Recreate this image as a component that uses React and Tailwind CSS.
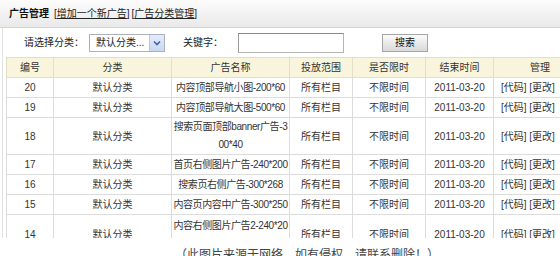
import React from "react";

const rows = [
  { id: "20", name: ["内容顶部导航小图-200*60"] },
  { id: "19", name: ["内容顶部导航大图-500*60"] },
  { id: "18", name: ["搜索页面顶部banner广告-3", "00*40"] },
  { id: "17", name: ["首页右侧图片广告-240*200"] },
  { id: "16", name: ["搜索页右侧广告-300*268"] },
  { id: "15", name: ["内容页内容中广告-300*250"] },
  { id: "14", name: ["内容右侧图片广告2-240*20", "0"] },
];

const td = "border border-[#dcdcdc] text-center px-0 py-0 whitespace-nowrap overflow-hidden";

export default function App() {
  return (
    <div
      className="w-[560px] h-[256px] overflow-hidden bg-white text-[#333] text-[10px]"
      style={{ fontFamily: '"Liberation Sans", "Noto Sans CJK SC", sans-serif' }}
    >
      {/* top bar */}
      <div className="h-[28px] border-b border-[#d4d4d4] bg-gradient-to-b from-[#fcfcfc] to-[#e9e9e9] flex items-center pl-[9px] text-[10px] text-[#222]">
        <span className="font-bold text-[#111]">广告管理</span>
        <span className="ml-[5px]">[<span className="underline">增加一个新广告</span>]</span>
        <span className="ml-[2px]">[<span className="underline">广告分类管理</span>]</span>
      </div>

      <div className="ml-[2px] border-l border-[#e2e2e2]">
        {/* filter row */}
        <div className="h-[29px] flex items-center pl-[21px] text-[10px] text-[#222]">
          <span>请选择分类：</span>
          <div className="ml-[5px] w-[76px] h-[18px] border border-[#a9b2bd] flex items-center bg-white">
            <span className="pl-[6px] flex-1">默认分类...</span>
            <div className="w-[15px] h-full bg-gradient-to-b from-[#e4ecf9] to-[#c9d8f0] border-l border-[#b8c7de] flex items-center justify-center">
              <svg width="8" height="6" viewBox="0 0 8 6">
                <path d="M1 1.5 L4 4.5 L7 1.5" stroke="#3d63a8" strokeWidth="1.6" fill="none" />
              </svg>
            </div>
          </div>
          <span className="ml-[18px]">关键字：</span>
          <div className="ml-[15px] w-[106px] h-[20px] border border-[#b5b5b5] border-t-[#8a8a8a] border-l-[#9a9a9a] bg-white" />
          <div className="ml-[38px] w-[46px] h-[18px] border border-[#a5a5a5] bg-gradient-to-b from-[#fbfbfb] to-[#d9d9d9] flex items-center justify-center text-[10px] text-[#111]">
            搜索
          </div>
        </div>

        {/* table */}
        <div className="h-[181px] overflow-hidden pl-[3px]">
          <table className="table-fixed border-collapse w-[580px]">
            <colgroup>
              <col className="w-[47px]" />
              <col className="w-[118px]" />
              <col className="w-[118px]" />
              <col className="w-[63px]" />
              <col className="w-[73px]" />
              <col className="w-[68px]" />
              <col className="w-[93px]" />
            </colgroup>
            <thead>
              <tr className="h-[20px] bg-[#f9f5dc]">
                {["编号", "分类", "广告名称", "投放范围", "是否限时", "结束时间", "管理"].map((h) => (
                  <th key={h} className="border border-[#e3dfc6] font-normal text-center text-[10px] text-[#333] p-0">
                    {h}
                  </th>
                ))}
              </tr>
            </thead>
            <tbody>
              {rows.map((r) => {
                const two = r.name.length > 1;
                return (
                  <tr key={r.id} className={two ? "h-[37px]" : "h-[20px]"}>
                    <td className={td}>{r.id}</td>
                    <td className={td}>默认分类</td>
                    <td
                      className={
                        td +
                        " tracking-[-0.4px] leading-[18px]" +
                        (r.id === "14" ? " align-top pt-[2px]" : "")
                      }
                    >
                      {r.name.map((n, i) => (
                        <div key={i}>{n}</div>
                      ))}
                    </td>
                    <td className={td}>所有栏目</td>
                    <td className={td}>不限时间</td>
                    <td className={td}>2011-03-20</td>
                    <td className={td + " text-left pl-[7px]"}>[代码] [更改]</td>
                  </tr>
                );
              })}
            </tbody>
          </table>
        </div>
      </div>

      {/* caption */}
      <div className="pl-[175px] pt-[9px] text-[12px] leading-[16px] text-[#444]">
        （此图片来源于网络，如有侵权，请联系删除！）
      </div>
    </div>
  );
}
